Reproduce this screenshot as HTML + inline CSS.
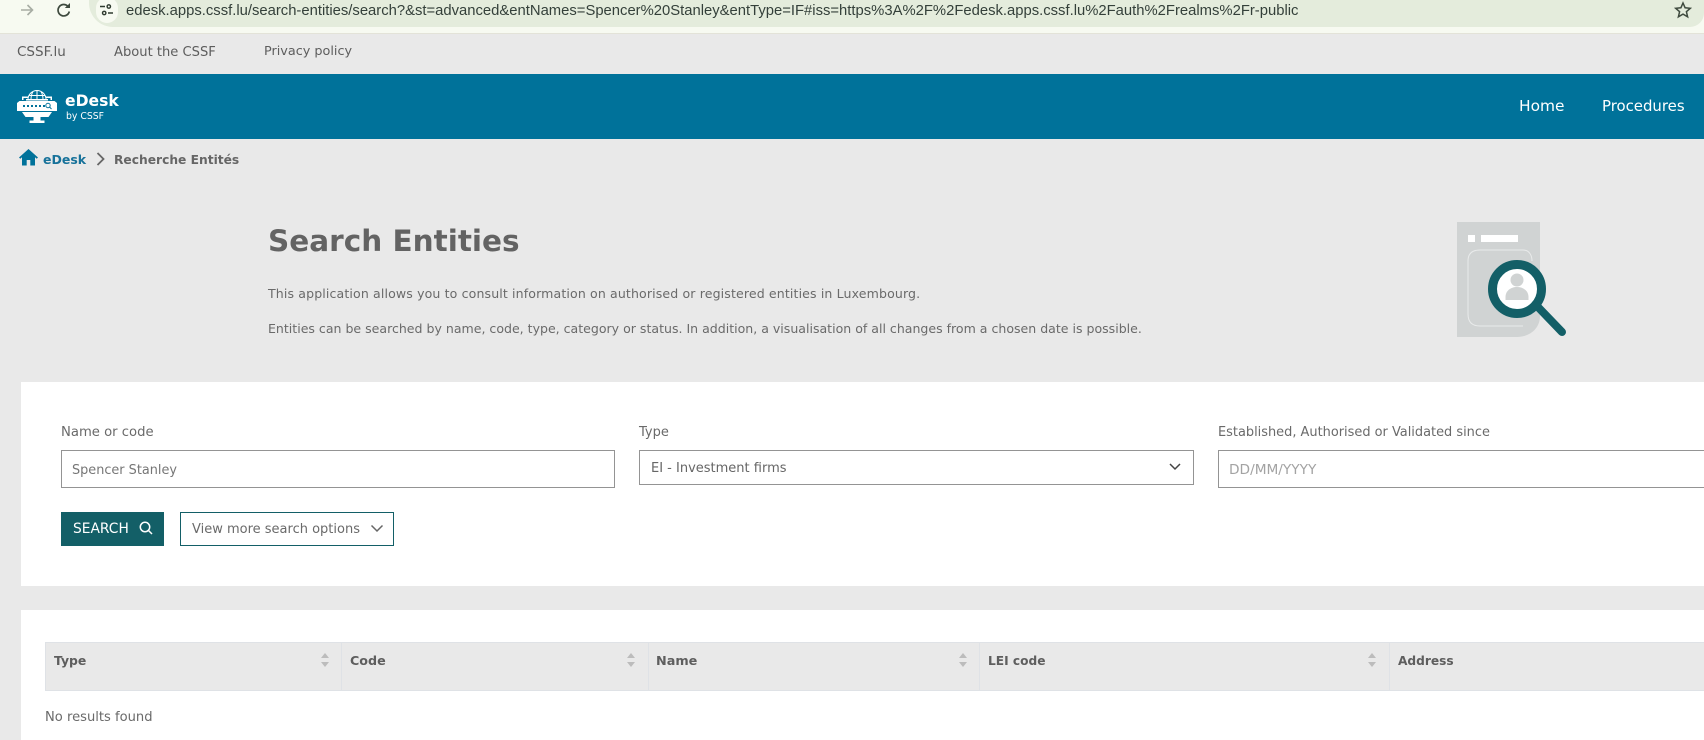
<!DOCTYPE html>
<html><head><meta charset="utf-8"><title>Search Entities</title>
<style>
html,body{margin:0;padding:0;width:1704px;height:740px;overflow:hidden;background:#e9e9e9}
body{position:relative;font-family:"DejaVu Sans","Liberation Sans",sans-serif;color:#666}
.a{position:absolute;white-space:nowrap;line-height:1}
.box{position:absolute;box-sizing:border-box}
svg{position:absolute;overflow:visible}
</style></head><body>
<div class="box" style="left:0;top:0;width:1704px;height:34px;background:#f7faf1;border-bottom:1px solid #e3e3d8"></div>
<div class="box" style="left:89px;top:-20px;width:1615px;height:47px;background:#e4ecdc;border-radius:0 0 14px 24px"></div>
<svg style="left:20px;top:4px" width="14" height="12" viewBox="0 0 14 12"><path d="M1 6h11.500M7.500 1l5 5-5 5" fill="none" stroke="#a8ada4" stroke-width="1.600"/></svg>
<svg style="left:56px;top:3px" width="15" height="15" viewBox="0 0 15 15"><path d="M11.800 3.200A5.700 5.700 0 1 0 13.300 8.500" fill="none" stroke="#3e4a3e" stroke-width="1.700"/><path d="M8.800 5H14V0z" fill="#3e4a3e"/></svg>
<div class="box" style="left:96px;top:-3px;width:22px;height:26px;border-radius:11px;background:#f7faf1"></div>
<svg style="left:100px;top:4px" width="13" height="12" viewBox="0 0 13 12"><g fill="none" stroke="#2f3a2f" stroke-width="1.400"><path d="M0 2.500h5M8 9h5"/><circle cx="8.800" cy="2.500" r="1.700"/><circle cx="4.200" cy="9" r="1.700"/></g></svg>
<div class="a" style="left:126px;top:1px;font:14.820px/20px 'Liberation Sans',sans-serif;color:#34403a">edesk.apps.cssf.lu/search-entities/search?&amp;st=advanced&amp;entNames=Spencer%20Stanley&amp;entType=IF#iss=https%3A%2F%2Fedesk.apps.cssf.lu%2Fauth%2Frealms%2Fr-public</div>
<svg style="left:1674px;top:1px" width="18" height="18" viewBox="0 0 18 18"><path d="M9 2l2.100 4.800 5.200.5-3.900 3.400 1.200 5.100L9 13.100l-4.600 2.700 1.200-5.100-3.900-3.400 5.200-.5z" fill="none" stroke="#3e4a3e" stroke-width="1.500"/></svg>

<div class="a" style="left:17px;top:46px;font-size:13.500px;color:#5d5d5d">CSSF.lu</div>
<div class="a" style="left:114px;top:46px;font-size:13.100px;color:#5d5d5d">About the CSSF</div>
<div class="a" style="left:264px;top:46px;font-size:12.800px;color:#5d5d5d">Privacy policy</div>

<div class="box" style="left:0;top:74px;width:1704px;height:65px;background:#00729a"></div>
<svg style="left:17px;top:90px" width="40" height="33" viewBox="0 0 40 33">
<g fill="#fff">
<path d="M0 13 2.500 11H37.500L40 13V21H0z"/>
<path d="M5 22H35L31.500 27H8.500z"/>
<path d="M16.500 27h7v3.500h4V33H12.500v-2.500h4z"/>
<path d="M5 6.500H11V8H6.500V10H5zM35 6.500H29V8h4.500V10H35z"/>
<path d="M9 9h22v1.500H9z"/>
</g>
<path d="M11 9.500a9 9 0 0 1 18 0M20 .5v9M16 1.500c-1.500 2.500-2 5-2 8M24 1.500c1.500 2.500 2 5 2 8M12 5.500h16" fill="none" stroke="#fff" stroke-width="1"/>
<g fill="#00729a"><rect x="6" y="15" width="2" height="2"/><rect x="10" y="15" width="2" height="2"/><rect x="14" y="15" width="2" height="2"/><rect x="18" y="15" width="2" height="2"/><rect x="22" y="15" width="2" height="2"/><rect x="26" y="15" width="2" height="2"/></g>
<circle cx="31" cy="15.500" r="2.200" fill="none" stroke="#00729a" stroke-width="1"/><path d="M32.500 17l2 2" stroke="#00729a"/>
</svg>
<div class="a" style="left:65px;top:94px;font-size:15.600px;font-weight:700;color:#fff">eDesk</div>
<div class="a" style="left:66px;top:112px;font-size:9.300px;color:#fff">by CSSF</div>
<div class="a" style="left:1519px;top:99px;font-size:15.400px;color:#fff">Home</div>
<div class="a" style="left:1602px;top:99px;font-size:14.900px;color:#fff">Procedures</div>

<svg style="left:19px;top:148px" width="19" height="18" viewBox="0 0 19 18"><path d="M9.500 1 0 9.500l1.300 1.300L3 9.300V17.500h4.700v-5.500h3.600v5.500H16V9.300l1.700 1.500L19 9.500z" fill="#00729a"/></svg>
<div class="a" style="left:43px;top:154px;font-size:12.500px;font-weight:700;color:#17729a">eDesk</div>
<svg style="left:96px;top:152px" width="10" height="14" viewBox="0 0 10 14"><path d="M1.500 1l6 6-6 6" fill="none" stroke="#666" stroke-width="1.800"/></svg>
<div class="a" style="left:114px;top:154px;font-size:12.250px;font-weight:700;color:#666">Recherche Entités</div>

<div class="a" style="left:268px;top:227px;font-size:29.500px;font-weight:700;color:#636363">Search Entities</div>
<div class="a" style="left:268px;top:288px;font-size:12.550px;letter-spacing:.13px;color:#6a6a6a">This application allows you to consult information on authorised or registered entities in Luxembourg.</div>
<div class="a" style="left:268px;top:323px;font-size:12.550px;color:#6a6a6a">Entities can be searched by name, code, type, category or status. In addition, a visualisation of all changes from a chosen date is possible.</div>

<svg style="left:1457px;top:222px" width="110" height="118" viewBox="0 0 110 118">
<path d="M0 0H83V94C83 107 72 115 60 115H0z" fill="#d0d3d3"/>
<rect x="11" y="13" width="7" height="7" fill="#fff"/><rect x="24" y="13" width="37" height="7" fill="#fff"/>
<path d="M66 104H23C15 104 11 100 11 92V39C11 32 15 28 23 28H66C72 28 75 33 75 39" fill="none" stroke="#e9ebeb" stroke-width="1"/>
<path d="M80 84l25 26" stroke="#135f67" stroke-width="8" stroke-linecap="round"/>
<circle cx="60" cy="67" r="24.500" fill="#fff" stroke="#135f67" stroke-width="9"/>
<circle cx="60" cy="58" r="6.500" fill="#d0d3d3"/>
<path d="M48.500 78V75c0-6 5-10 11.500-10s11.500 4 11.500 10v3z" fill="#d0d3d3"/>
</svg>

<div class="box" style="left:21px;top:382px;width:1683px;height:204px;background:#fff"></div>
<div class="a" style="left:61px;top:426px;font-size:13.200px;color:#6a6a6a">Name or code</div>
<div class="box" style="left:61px;top:450px;width:554px;height:38px;background:#fff;border:1px solid #949494"></div>
<div class="a" style="left:72px;top:465px;font-size:12.850px;color:#767676">Spencer Stanley</div>
<div class="a" style="left:639px;top:426px;font-size:13px;color:#6a6a6a">Type</div>
<div class="box" style="left:639px;top:450px;width:555px;height:35px;background:#fff;border:1px solid #949494"></div>
<div class="a" style="left:651px;top:462px;font-size:13px;color:#666">EI - Investment firms</div>
<svg style="left:1168px;top:462px" width="14" height="10" viewBox="0 0 14 10"><path d="M2 2l5 5 5-5" fill="none" stroke="#444" stroke-width="1.500"/></svg>
<div class="a" style="left:1218px;top:427px;font-size:12.930px;color:#6a6a6a">Established, Authorised or Validated since</div>
<div class="box" style="left:1218px;top:450px;width:500px;height:38px;background:#fff;border:1px solid #949494"></div>
<div class="a" style="left:1229px;top:464px;font-size:13.700px;color:#a3a3a3">DD/MM/YYYY</div>

<div class="box" style="left:61px;top:512px;width:103px;height:34px;background:#135f67"></div>
<div class="a" style="left:73px;top:523px;font-size:13.800px;color:#fff">SEARCH</div>
<svg style="left:139px;top:521px" width="14" height="14" viewBox="0 0 14 14"><circle cx="6" cy="6" r="4.700" fill="none" stroke="#fff" stroke-width="1.500"/><path d="M9.500 9.500l3.500 3.500" stroke="#fff" stroke-width="1.500"/></svg>
<div class="box" style="left:180px;top:512px;width:214px;height:34px;background:#fff;border:1px solid #135f67"></div>
<div class="a" style="left:192px;top:523px;font-size:13px;color:#6a6a6a">View more search options</div>
<svg style="left:370px;top:524px" width="14" height="10" viewBox="0 0 14 10"><path d="M1.500 1.500l5.500 5.500 5.500-5.500" fill="none" stroke="#666" stroke-width="1.500"/></svg>

<div class="box" style="left:21px;top:610px;width:1683px;height:130px;background:#fff"></div>
<div class="box" style="left:45px;top:642px;width:1659px;height:49px;background:#e9e9e9;border:1px solid #dfe2e6;border-right:0"></div>
<div class="box" style="left:341px;top:642px;width:1px;height:49px;background:#dfe2e6"></div>
<div class="box" style="left:648px;top:642px;width:1px;height:49px;background:#dfe2e6"></div>
<div class="box" style="left:979px;top:642px;width:1px;height:49px;background:#dfe2e6"></div>
<div class="box" style="left:1389px;top:642px;width:1px;height:49px;background:#dfe2e6"></div>
<div class="a" style="left:54px;top:655px;font-size:12.400px;font-weight:700;color:#5e5e5e">Type</div>
<div class="a" style="left:350px;top:655px;font-size:12.700px;font-weight:700;color:#5e5e5e">Code</div>
<div class="a" style="left:656px;top:656px;font-size:12.800px;font-weight:700;color:#5e5e5e">Name</div>
<div class="a" style="left:988px;top:655px;font-size:12.200px;font-weight:700;color:#5e5e5e">LEI code</div>
<div class="a" style="left:1398px;top:655px;font-size:12.200px;font-weight:700;color:#5e5e5e">Address</div>
<svg style="left:321px;top:653px" width="8" height="14" viewBox="0 0 8 14"><path d="M4 0l4 5H0zM0 9h8l-4 5z" fill="#bcbcbc"/></svg>
<svg style="left:627px;top:653px" width="8" height="14" viewBox="0 0 8 14"><path d="M4 0l4 5H0zM0 9h8l-4 5z" fill="#bcbcbc"/></svg>
<svg style="left:959px;top:653px" width="8" height="14" viewBox="0 0 8 14"><path d="M4 0l4 5H0zM0 9h8l-4 5z" fill="#bcbcbc"/></svg>
<svg style="left:1368px;top:653px" width="8" height="14" viewBox="0 0 8 14"><path d="M4 0l4 5H0zM0 9h8l-4 5z" fill="#bcbcbc"/></svg>
<div class="a" style="left:45px;top:711px;font-size:13.100px;color:#6a6a6a">No results found</div>
</body></html>
